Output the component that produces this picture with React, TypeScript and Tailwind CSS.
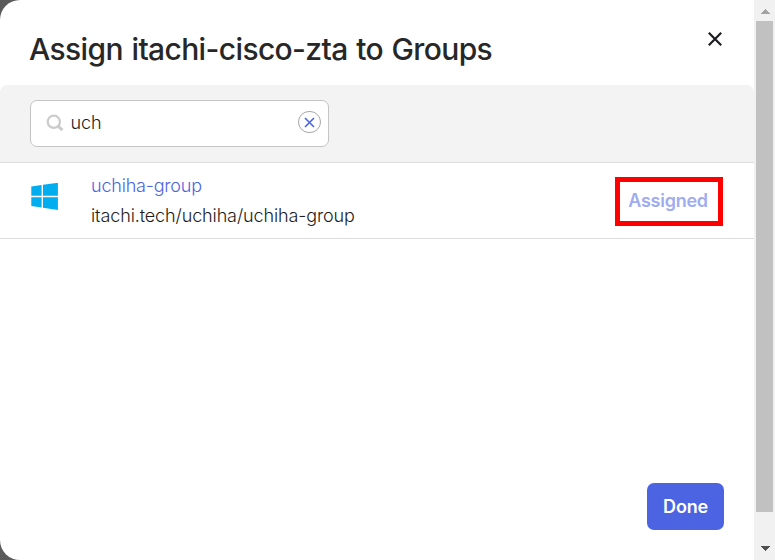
import React from "react";

function WindowsLogo() {
  return (
    <svg width="28" height="28" viewBox="0 0 28 28" fill="#00adef" className="block">
      <path d="M0.3 3.6 10.6 1.9V12.8H0.3zM12 1.7 26.9-0.2V12.8H12zM0.3 14.2H10.6V24.6L0.3 22.9zM12 14.2H26.9V26.9L12 24.8z" />
    </svg>
  );
}

function SearchField() {
  return (
    <div className="flex h-[47px] w-[299px] items-center rounded-[7px] border border-[#c4c4c4] bg-white pb-[3px] pl-[15px] pr-[7px]">
      <svg width="18" height="18" viewBox="0 0 18 18" fill="none" stroke="#cbcbcb" className="mt-[2px] shrink-0">
        <circle cx="7.8" cy="7.8" r="6.1" strokeWidth="2.2" />
        <path d="M12 12 16.4 16.2" strokeWidth="3" />
      </svg>
      <span className="ml-[6.5px] mt-[2px] grow text-[18px] font-light leading-[24px] tracking-[-0.1px] text-[#1d1d21]">uch</span>
      <button className="flex h-[22px] w-[23px] items-center justify-center rounded-full border border-[#a7a7a7]">
        <svg width="11" height="11" viewBox="0 0 11 11" stroke="#4c64e1" strokeWidth="1.6">
          <path d="M1 1 10 10M10 1 1 10" />
        </svg>
      </button>
    </div>
  );
}

function Scrollbar() {
  return (
    <div className="flex w-[21px] shrink-0 flex-col items-center bg-[#f1f1f1]">
      <div className="flex h-[21px] items-start pt-[9px]">
        <svg width="10" height="5" viewBox="0 0 10 5" fill="#a3a3a3" shapeRendering="crispEdges">
          <path d="M5 0 10 5H0z" />
        </svg>
      </div>
      <div className="h-[491px] w-[17px] bg-[#c1c1c1]" />
      <div className="flex grow items-start pt-[34px]">
        <svg width="10" height="5" viewBox="0 0 10 5" fill="#505050" shapeRendering="crispEdges">
          <path d="M0 0H10L5 5z" />
        </svg>
      </div>
    </div>
  );
}

export default function App() {
  return (
    <div className="flex h-[560px] w-[775px] overflow-hidden bg-[#5a5a5a] font-[Inter,sans-serif] text-[#1d1d21]">
      <main className="flex w-[754px] flex-col rounded-l-[20px] bg-white">
        <header className="flex h-[85px] items-start justify-between pl-[29px] pr-[32px]">
          <h1 className="mt-[30px] whitespace-nowrap text-[30px] font-medium leading-[38px] tracking-[-0.63px] text-[#272727] [word-spacing:1.2px]">
            Assign itachi-cisco-zta to Groups
          </h1>
          <button className="mt-[32px]">
            <svg width="14" height="14" viewBox="0 0 14 14" stroke="#1d1d21" strokeWidth="2.2" className="block">
              <path d="M0.8 0.8 13.2 13.2M13.2 0.8 0.8 13.2" />
            </svg>
          </button>
        </header>
        <section className="h-[77px] rounded-t-[7px] bg-[#f3f3f3] pl-[30px] pt-[15px]">
          <SearchField />
        </section>
        <section className="flex h-[77px] items-start border-y border-[#dddddd] pl-[31px] pr-[31px]">
          <div className="mt-[20px] w-[60px]">
            <WindowsLogo />
          </div>
          <div className="mt-[8px] grow text-[18px] font-light leading-[30px] tracking-[-0.12px]">
            <a className="block tracking-[-0.2px] text-[#4c64e1]">uchiha-group</a>
            <p>itachi.tech/uchiha/uchiha-group</p>
          </div>
          <div className="mt-[14px] flex h-[49px] w-[108px] items-center justify-center border-[5px] border-[#ff0000] pb-[2px] pr-[2px] text-[18px] font-semibold tracking-[-0.25px] text-[#a0acf0]">
            Assigned
          </div>
        </section>
        <footer className="mt-auto flex justify-end pb-[30px] pr-[30px]">
          <button className="h-[47px] w-[77px] rounded-[7px] bg-[#4c64e1] text-[18px] font-semibold tracking-[-0.2px] text-white">Done</button>
        </footer>
      </main>
      <Scrollbar />
    </div>
  );
}
